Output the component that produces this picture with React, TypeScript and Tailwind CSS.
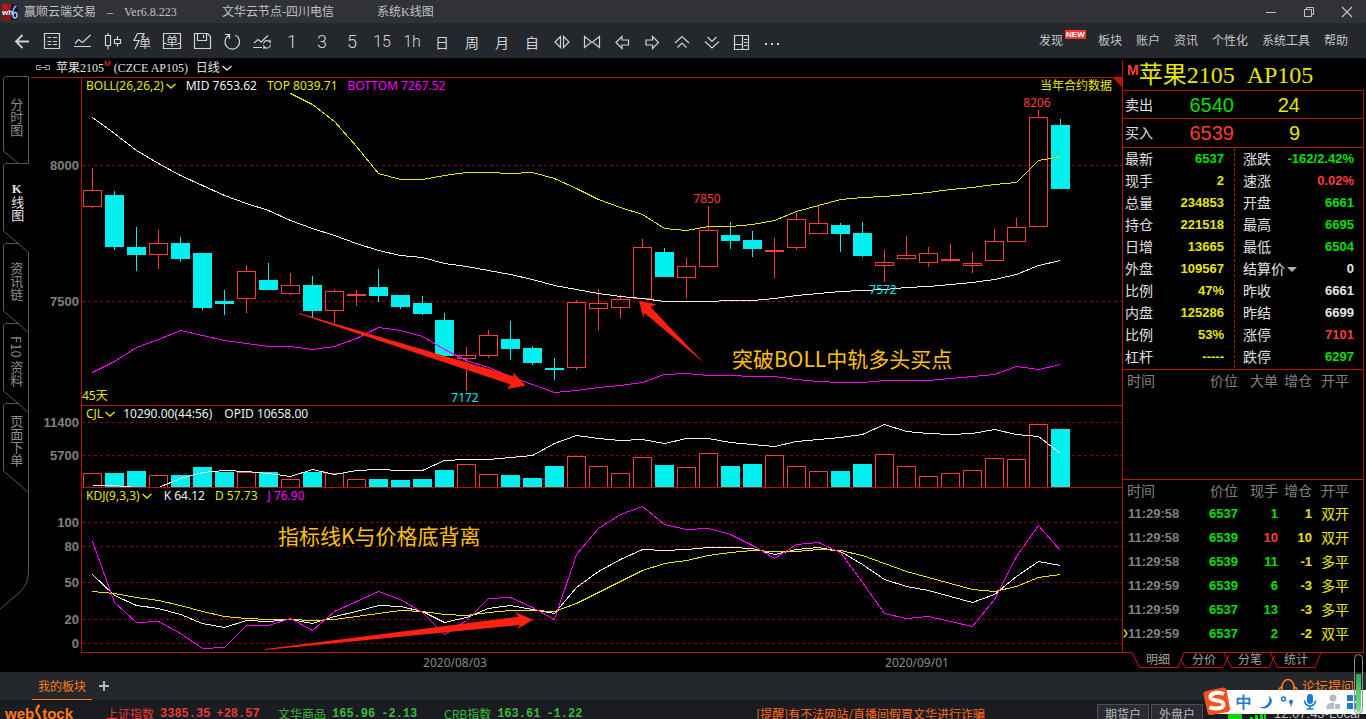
import type { ReactNode } from 'react';

type Candle = [kind: 'u' | 'd', high: number, top: number, bottom: number, low: number];

// chart space: first bar sits at x=92, one bar every 22px
const FIRST_X = 92;
const STEP = 22;
const AXIS_LEFT = 31;
const RED = '#ff3b3b';
const CYAN = '#00f0f0';
const FRAME = '#b8140c';

const candles: Candle[] = [
  ['u', 168, 190, 207, 208], ['d', 191, 195, 247, 250], ['d', 227, 247, 255, 271],
  ['u', 230, 243, 255, 269], ['d', 237, 243, 259, 262], ['d', 253, 253, 308, 310],
  ['d', 290, 301, 304, 315], ['u', 265, 271, 299, 313], ['d', 263, 280, 290, 290],
  ['u', 273, 285, 294, 295], ['d', 276, 285, 311, 317], ['u', 289, 291, 311, 323],
  ['u', 290, 294, 296, 306], ['d', 269, 287, 296, 302], ['d', 295, 295, 307, 309],
  ['d', 296, 303, 314, 315], ['d', 313, 320, 356, 356], ['u', 347, 355, 359, 391],
  ['u', 330, 335, 356, 358], ['d', 321, 339, 349, 360], ['d', 346, 348, 363, 365],
  ['d', 358, 368, 370, 380], ['u', 300, 302, 368, 370], ['u', 289, 303, 309, 330],
  ['u', 295, 299, 308, 318], ['u', 239, 247, 299, 299], ['d', 248, 252, 277, 277],
  ['u', 258, 266, 278, 298], ['u', 206, 230, 267, 267], ['d', 222, 235, 241, 249],
  ['d', 231, 240, 249, 257], ['u', 238, 250, 252, 278], ['u', 213, 219, 248, 250],
  ['u', 205, 223, 234, 234], ['d', 223, 225, 234, 252], ['d', 222, 233, 256, 257],
  ['u', 250, 262, 266, 282], ['u', 236, 255, 259, 260], ['u', 247, 253, 263, 267],
  ['u', 244, 259, 261, 262], ['u', 252, 263, 266, 273], ['u', 229, 241, 261, 261],
  ['u', 218, 227, 242, 242], ['u', 110, 117, 227, 227], ['d', 119, 125, 189, 189],
];

const bollMid = [117, 133, 150, 163, 175, 185, 195, 203, 210, 220, 228, 235, 243, 250, 255, 257, 263, 266, 270, 274, 279, 285, 289, 293, 296, 298, 301, 301, 301, 300, 300, 298, 295, 293, 291, 290, 289, 287, 286, 284, 282, 279, 274, 265, 260];
const bollTop = [93, 104, 121, 146, 173, 179, 179, 175, 172, 172, 173, 172, 178, 188, 199, 207, 214, 228, 230, 226, 226, 224, 220, 211, 205, 199, 197, 196, 194, 192, 189, 187, 184, 182, 160, 156];
const bollBottom = [372, 361, 347, 339, 330, 335, 340, 343, 346, 346, 349, 346, 338, 327, 330, 336, 349, 360, 367, 376, 384, 392, 390, 387, 385, 382, 374, 373, 375, 375, 376, 376, 379, 381, 382, 382, 380, 380, 380, 378, 376, 374, 366, 369, 364];

const volumes = [473, 473, 471, 475, 475, 467, 472, 472, 472, 479, 472, 473, 479, 479, 480, 479, 470, 464, 474, 475, 478, 466, 456, 466, 473, 457, 465, 467, 453, 466, 464, 455, 466, 471, 471, 464, 454, 466, 476, 473, 470, 458, 459, 424, 429];
const openInterest = [485, 485, 487, 487, 478, 472, 470, 471, 473, 476, 469, 474, 470, 469, 470, 470, 460, 459, 459, 457, 455, 443, 435, 438, 440, 439, 443, 438, 438, 442, 444, 446, 441, 439, 437, 434, 424, 431, 433, 434, 433, 429, 434, 436, 453];

const kdjJ = [541, 602, 622, 621, 633, 648, 647, 625, 625, 618, 630, 611, 601, 591, 599, 612, 634, 620, 598, 597, 607, 619, 554, 528, 514, 506, 524, 529, 528, 534, 545, 558, 544, 542, 552, 582, 613, 618, 616, 621, 626, 599, 556, 525, 550];
const kdjK = [574, 595, 605, 608, 614, 623, 627, 620, 621, 619, 623, 616, 611, 605, 606, 611, 622, 617, 608, 605, 609, 613, 587, 571, 559, 549, 550, 549, 547, 547, 548, 554, 549, 547, 551, 564, 579, 586, 590, 596, 602, 594, 576, 561, 565];
const kdjD = [591, 593, 597, 600, 605, 611, 616, 618, 619, 619, 620, 619, 616, 613, 610, 611, 614, 615, 612, 610, 610, 611, 603, 592, 581, 570, 563, 560, 555, 552, 550, 551, 551, 549, 550, 555, 563, 571, 577, 583, 589, 591, 586, 577, 574];

const quoteLeft = [
  ['最新', '6537', 'text-[#00e000]'],
  ['现手', '2', 'text-[#e6e600]'],
  ['总量', '234853', 'text-[#e6e600]'],
  ['持仓', '221518', 'text-[#e6e600]'],
  ['日增', '13665', 'text-[#e6e600]'],
  ['外盘', '109567', 'text-[#e6e600]'],
  ['比例', '47%', 'text-[#e6e600]'],
  ['内盘', '125286', 'text-[#e6e600]'],
  ['比例', '53%', 'text-[#e6e600]'],
  ['杠杆', '-----', 'text-[#e6e600]'],
];

const quoteRight = [
  ['涨跌', '-162/2.42%', 'text-[#00e000]'],
  ['速涨', '0.02%', 'text-[#ff3b3b]'],
  ['开盘', '6661', 'text-[#00e000]'],
  ['最高', '6695', 'text-[#00e000]'],
  ['最低', '6504', 'text-[#00e000]'],
  ['结算价', '0', 'text-[#e6e6e6]'],
  ['昨收', '6661', 'text-[#e6e6e6]'],
  ['昨结', '6699', 'text-[#e6e6e6]'],
  ['涨停', '7101', 'text-[#ff3b3b]'],
  ['跌停', '6297', 'text-[#00e000]'],
];

const trades = [
  { time: '11:29:58', price: '6537', lots: '1', change: '1', type: '双开', lotsColor: 'text-[#00e000]' },
  { time: '11:29:58', price: '6539', lots: '10', change: '10', type: '双开', lotsColor: 'text-[#ff3b3b]' },
  { time: '11:29:58', price: '6539', lots: '11', change: '-1', type: '多平', lotsColor: 'text-[#00e000]' },
  { time: '11:29:59', price: '6539', lots: '6', change: '-3', type: '多平', lotsColor: 'text-[#00e000]' },
  { time: '11:29:59', price: '6537', lots: '13', change: '-3', type: '多平', lotsColor: 'text-[#00e000]' },
  { time: '11:29:59', price: '6537', lots: '2', change: '-2', type: '双平', lotsColor: 'text-[#00e000]' },
];

const glyph = "font-['Noto_Sans_CJK_SC',sans-serif]";
const song = "font-['Liberation_Serif','Noto_Sans_CJK_SC',serif]";

function Icon({ children }: { children: ReactNode }) {
  return (
    <svg width="24" height="24" viewBox="0 0 24 24" fill="none" stroke="currentColor" strokeWidth="1.2" aria-hidden="true">
      {children}
    </svg>
  );
}

const tools: { label: string; icon: ReactNode }[] = [
  { label: '返回', icon: <Icon><path strokeWidth="1.8" d="M19 11.5H6.5M12.5 5L6 11.5L12.5 18" /></Icon> },
  { label: '报价', icon: <Icon><path d="M4.5 3.5h15v15h-15zM7.5 7.5h4M13 7.5h4M7.5 11.5h4M13 11.5h4M7.5 14.5h4M13 14.5h4" /></Icon> },
  { label: '分时', icon: <Icon><path d="M4 16.5h17M5 13.5L8.5 9.5L12.5 12.5L20.5 5" /></Icon> },
  { label: 'K线', icon: <Icon><path d="M5.5 5.5h5v10h-5zM8 3v2.5M8 15.5v4M14.5 9.5h6v4h-6zM17.5 6v3.5M17.5 13.5v3" /></Icon> },
  {
    label: '闪电下单',
    icon: (
      <Icon>
        <path d="M7.5 3.500h6.500l-2 3.500h3M7.500 3.500L4 10.500h5L5 19" />
        <text x="9" y="18" fontSize="12" fill="currentColor" stroke="none" className={glyph}>单</text>
      </Icon>
    ),
  },
  {
    label: '下单',
    icon: (
      <Icon>
        <path d="M3.5 3.5h17v15h-17zM3.5 13.5h3M17.5 13.5h3" />
        <text x="6" y="16" fontSize="12" fill="currentColor" stroke="none" className={glyph}>单</text>
      </Icon>
    ),
  },
  { label: '保存', icon: <Icon><path d="M4.5 3.5h13l3 3v12h-16zM7.5 3.5v7h9v-7M13.5 5v3" /></Icon> },
  { label: '刷新', icon: <Icon><path d="M9 5.3A7.3 7.3 0 1 0 15.5 5.3M9.5 9V4.5H5" /></Icon> },
  { label: '切换', icon: <Icon><path d="M3 17.5h9M4 13L8 9.5L11 12L18 5.5M13.5 13.5a3.6 3.6 0 0 1 6.6-1.2v-2.5M20.5 15a3.6 3.6 0 0 1-6.6 1.4v2.6" /></Icon> },
  { label: '1', icon: <span className="font-['Roboto',sans-serif] text-lg leading-6 font-light">1</span> },
  { label: '3', icon: <span className="font-['Roboto',sans-serif] text-lg leading-6 font-light">3</span> },
  { label: '5', icon: <span className="font-['Roboto',sans-serif] text-lg leading-6 font-light">5</span> },
  { label: '15', icon: <span className="font-['Roboto',sans-serif] text-base leading-6 font-light">15</span> },
  { label: '1h', icon: <span className="font-['Roboto',sans-serif] text-base leading-6 font-light">1h</span> },
  { label: '日', icon: <span className="text-sm">日</span> },
  { label: '周', icon: <span className="text-sm">周</span> },
  { label: '月', icon: <span className="text-sm">月</span> },
  { label: '自', icon: <span className="text-sm">自</span> },
  { label: '放宽', icon: <Icon><path d="M10.5 6.5L5 12l5.5 5.5zM13.5 6.5L19 12l-5.5 5.5z" /></Icon> },
  { label: '收窄', icon: <Icon><path d="M4.5 6.5L11.5 12l-7 5.5zM19.5 6.5L12.5 12l7 5.5z" /></Icon> },
  { label: '左移', icon: <Icon><path d="M6 12.5L12 6.5V10h6.5v5H12v3.5z" /></Icon> },
  { label: '右移', icon: <Icon><path d="M18.5 12.5L12.5 6.5V10H6v5h6.5v3.5z" /></Icon> },
  { label: '上移', icon: <Icon><path d="M5 13L12 6.5L19 13M7.5 17.5L12 13L16.5 17.5" /></Icon> },
  { label: '下移', icon: <Icon><path d="M5 11.5L12 18L19 11.5M7.5 7L12 11.5L16.5 7" /></Icon> },
  { label: '布局', icon: <Icon><path d="M4.5 5.5h14v14h-14zM12.5 5.5v14M4.5 14.5h8M14 9.5h3.5M14 12.5h3.5M14 15.5h3.5" /></Icon> },
  { label: '更多', icon: <Icon><path strokeWidth="2" d="M5 14h2M11 14h2M17 14h2" /></Icon> },
];

function TitleBar() {
  return (
    <header className={`${song} flex h-[23px] shrink-0 items-center bg-[#303238] pl-[2px] text-xs text-[#c0c2c6]`}>
      <svg width="16" height="16" viewBox="0 0 16 16" aria-hidden="true">
        <rect width="16" height="16" fill="#101a3c" />
        <path d="M0 0h9v4L5 9H0z" fill="#b01818" />
        <path d="M0 10h9v6H0z" fill="#8c1414" />
        <text x="0" y="11" fontSize="8" fontWeight="bold" fill="#fff" fontFamily="Liberation Sans">wh</text>
        <path d="M14.5 1.5C11 4 10.5 8 11 11M13 8.5a2 2.7 0 1 1 0 5.4a2 2.7 0 1 1 0-5.4" fill="none" stroke="#9cc8ff" strokeWidth="1.5" />
      </svg>
      <h1 className="ml-[6px]">赢顺云端交易</h1>
      <span className="ml-[8px] w-[12px] text-center">–</span>
      <span className="ml-[8px] w-[98px]">Ver6.8.223</span>
      <span className="w-[155px]">文华云节点-四川电信</span>
      <span>系统K线图</span>
      <div className="ml-auto flex h-full">
        <button aria-label="最小化" className="flex w-[38px] items-center justify-center">
          <svg width="12" height="12" stroke="currentColor" fill="none"><path d="M1 6.5h10" /></svg>
        </button>
        <button aria-label="还原" className="flex w-[38px] items-center justify-center">
          <svg width="12" height="12" stroke="currentColor" fill="none"><path d="M1.5 3.5h7v7h-7zM3.5 3.5v-2h7v7h-2" /></svg>
        </button>
        <button aria-label="关闭" className="flex w-[38px] items-center justify-center">
          <svg width="12" height="12" stroke="currentColor" fill="none" strokeWidth="1.3"><path d="M1 1l10 10M11 1L1 11" /></svg>
        </button>
      </div>
    </header>
  );
}

function Toolbar() {
  return (
    <div className={`${glyph} flex h-[35px] shrink-0 items-center justify-between bg-[#24272c] pr-[18px] pl-[7px] text-[#d0d2d4]`}>
      <div className="flex pt-[3px]">
        {tools.map((t) => (
          <button key={t.label} aria-label={t.label} className="flex h-6 w-[30px] items-center justify-center leading-6">
            {t.icon}
          </button>
        ))}
      </div>
      <nav className="flex gap-[14px] pb-[2px] text-xs text-[#c4c6c8]">
        <a href="#" className="relative mr-[21px]">
          发现
          <span className="absolute -top-[2px] left-full ml-[2px] h-[9px] w-[21px] bg-[#ff3330] text-center font-['Liberation_Sans',sans-serif] text-[8px] leading-[9px] font-bold text-white">NEW</span>
        </a>
        <a href="#">板块</a>
        <a href="#">账户</a>
        <a href="#">资讯</a>
        <a href="#">个性化</a>
        <a href="#">系统工具</a>
        <a href="#">帮助</a>
      </nav>
    </div>
  );
}

function SideTabs() {
  const tab = 'flex h-20 w-full items-center justify-center pb-1 [writing-mode:vertical-rl]';
  return (
    <aside className={`${glyph} relative w-[31px] shrink-0 pt-[18px] text-[13px] text-[#8c8c8c]`}>
      <svg className="absolute inset-0 h-full w-full" fill="none" stroke="#565656" aria-hidden="true">
        <path d="M18.5 105.5L3.5 93V20.5L5.5 18.5H28.5V105.5H5.5L3.5 107.5V173L28.5 194.5" />
        <path d="M18.5 185.5H5.5L3.5 187.5V253L28.5 274.5M18.5 265.5H5.5L3.5 267.5V333L28.5 354.5M18.5 345.5H5.5L3.5 347.5V413L28.5 434.5" />
        <path d="M28.5 194V515Q28 527 19 535L0 551" />
      </svg>
      <nav className="relative pl-[2px]">
        <button className="flex h-[87px] w-full items-center justify-center pb-1 [writing-mode:vertical-rl]">分时图</button>
        <button className={`${song} ${tab} text-[#e0e0e0] [text-orientation:upright]`}><b>K</b>线图</button>
        <button className={tab}>资讯链</button>
        <button className={tab}>F10 资料</button>
        <button className={tab}>页面下单</button>
      </nav>
    </aside>
  );
}

function Series({ values, color, start = 0 }: { values: number[]; color: string; start?: number }) {
  const points = values.map((v, i) => `${FIRST_X + 0.5 + (start + i) * STEP},${v + 0.5}`).join(' ');
  return <polyline points={points} fill="none" stroke={color} shapeRendering="crispEdges" />;
}

function Pane({ top, height, levels, title, children }: {
  top: number;
  height: string;
  levels: [number, string][];
  title: ReactNode;
  children: ReactNode;
}) {
  return (
    <section className={`relative ${height}`}>
      <svg className="absolute inset-0 h-full w-full overflow-hidden font-['Noto_Sans','Noto_Sans_CJK_SC',sans-serif]">
        <line x1="50.5" x2="50.5" y1="0" y2="100%" stroke={FRAME} />
        {levels.map(([y, label]) => (
          <g key={label}>
            <line x1="51" x2="100%" y1={y - top + 0.5} y2={y - top + 0.5} stroke="#860000" strokeDasharray="3 3" />
            <text x="48" y={y - top + 5} textAnchor="end" fontSize="13" fontWeight="bold" fill="#808080" className="font-['Liberation_Sans',sans-serif]">{label}</text>
          </g>
        ))}
        <g transform={`translate(${-AXIS_LEFT} ${-top})`}>{children}</g>
      </svg>
      <div className="relative flex h-4 items-center pl-[55px] text-xs">{title}</div>
    </section>
  );
}

function Chevron() {
  return (
    <svg width="10" height="8" fill="none" stroke="currentColor" strokeWidth="1.4" className="shrink-0"><path d="M0.5 2l4.5 4l4.5 -4" /></svg>
  );
}

function Rule() {
  return <div className="ml-[50px] h-px bg-[#b8140c]" />;
}

function Charts() {
  return (
    <main className="flex min-w-0 flex-1 flex-col font-['Noto_Sans','Noto_Sans_CJK_SC',sans-serif]">
      <div className={`${song} flex h-[19px] items-center pl-[4px] text-xs text-[#e0e0e0]`}>
        <svg width="16" height="8" fill="none" stroke="#a0a0a0"><path d="M6 1.5H1.5v4H6M10 1.5h4.5v4H10M4 3.5h8" /></svg>
        <h2 className="ml-[5px]">苹果2105</h2>
        <span className="mb-[6px] font-['Liberation_Sans',sans-serif] text-[8px] text-[#ff3b3b]">M</span>
        <span className="ml-[3px] w-[82px] whitespace-nowrap">(CZCE AP105)</span>
        <button className="flex items-center gap-[2px]">日线<Chevron /></button>
      </div>
      <div className="h-px bg-[#b8140c]" />

      <Pane
        top={78}
        height="h-[327px]"
        levels={[[165, '8000'], [301, '7500']]}
        title={
          <>
            <button className="flex items-center gap-[2px] text-[#e6e600]">BOLL(26,26,2)<Chevron /></button>
            <span className="ml-[10px] text-[#f0f0f0]">MID 7653.62</span>
            <span className="ml-[10px] text-[#e6e600]">TOP 8039.71</span>
            <span className="ml-[10px] text-[#ff00ff]">BOTTOM 7267.52</span>
            <span className="mr-[10px] ml-auto text-[#e6e600]">当年合约数据</span>
            <span className="absolute top-0 right-0 h-[9px] w-[9px] bg-[#b8140c] [clip-path:polygon(0_0,100%_0,100%_100%)]" />
          </>
        }
      >
        {candles.map(([kind, high, top, bottom, low], i) => {
          const x = FIRST_X + i * STEP;
          const color = kind === 'u' ? RED : CYAN;
          return (
            <g key={i} fill={color} shapeRendering="crispEdges">
              <rect x={x} y={high} width="1" height={top - high} />
              <rect x={x} y={bottom} width="1" height={low - bottom} />
              {kind === 'u'
                ? <rect x={x - 8.5} y={top + 0.5} width="18" height={bottom - top - 1} fill="none" stroke={color} />
                : <rect x={x - 9} y={top} width="19" height={bottom - top} />}
            </g>
          );
        })}
        <Series values={bollMid} color="#f0f0f0" />
        <Series values={bollTop} color="#e6e600" start={9} />
        <Series values={bollBottom} color="#ff00ff" />
        <g fontSize="12" textAnchor="middle">
          <text x="707" y="203" fill={RED}>7850</text>
          <text x="1037" y="107" fill={RED}>8206</text>
          <text x="465" y="402" fill={CYAN}>7172</text>
          <text x="883" y="294" fill={CYAN}>7572</text>
        </g>
        <text x="82" y="400" fontSize="12" fill="#e6e600">45天</text>
        <g fill="#ff2010">
          <path d="M299 313L514 376.5L513 372L525.5 385.7L507 389L510.5 384.5L299 314z" />
          <path d="M704 363L644.5 313L643.3 317.5L639 301L656.5 304.3L650.5 307z" />
        </g>
        <text x="732" y="367" fontSize="21" fill="#ffc000" className={glyph}>突破BOLL中轨多头买点</text>
      </Pane>
      <Rule />

      <Pane
        top={406}
        height="h-[81px]"
        levels={[[422, '11400'], [455, '5700']]}
        title={
          <>
            <button className="flex items-center gap-[2px] text-[#e6e600]">CJL<Chevron /></button>
            <span className="ml-2 text-[#f0f0f0]">10290.00(44:56)</span>
            <span className="ml-[12px] text-[#f0f0f0]">OPID 10658.00</span>
          </>
        }
      >
        {volumes.map((top, i) => {
          const x = FIRST_X + i * STEP;
          return candles[i][0] === 'u'
            ? <path key={i} d={`M${x - 8.5} 487V${top + 0.5}H${x + 9.5}V487`} fill="#000" stroke={RED} />
            : <rect key={i} x={x - 9} y={top} width="19" height={487 - top} fill={CYAN} />;
        })}
        <Series values={openInterest} color="#f0f0f0" />
      </Pane>
      <Rule />

      <Pane
        top={488}
        height="h-[164px]"
        levels={[[522, '100'], [546, '80'], [582, '50'], [619, '20'], [643, '0']]}
        title={
          <>
            <button className="flex items-center gap-[2px] text-[#e6e600]">KDJ(9,3,3)<Chevron /></button>
            <span className="ml-[12px] text-[#f0f0f0]">K 64.12</span>
            <span className="ml-[10px] text-[#e6e600]">D 57.73</span>
            <span className="ml-[10px] text-[#ff00ff]">J 76.90</span>
          </>
        }
      >
        <Series values={kdjK} color="#f0f0f0" />
        <Series values={kdjD} color="#e6e600" />
        <Series values={kdjJ} color="#ff00ff" />
        <path d="M265 649L518.5 616.7L515 612L533 619.7L517.5 629L519.5 625L265 650z" fill="#ff2010" />
        <text x="278" y="544" fontSize="21" fill="#ffc000" className={glyph}>指标线K与价格底背离</text>
      </Pane>
      <Rule />
      <svg className="h-[19px] w-full text-xs" fill="#8c8c8c" textAnchor="middle">
        <text x="424" y="14">2020/08/03</text>
        <text x="886" y="14">2020/09/01</text>
      </svg>
    </main>
  );
}

function TradeHead({ lots }: { lots: string }) {
  return (
    <>
      <colgroup>
        <col />
        <col className="w-[45px]" />
        <col className="w-10" />
        <col className="w-[34px]" />
        <col className="w-[51px]" />
      </colgroup>
      <thead className="text-sm leading-[22px] text-[#808080]">
        <tr>
          <th className="pl-1 text-left font-normal">时间</th>
          <th className="text-right font-normal">价位</th>
          <th className="text-right font-normal">{lots}</th>
          <th className="text-right font-normal">增仓</th>
          <th className="pr-[14px] text-right font-normal">开平</th>
        </tr>
      </thead>
    </>
  );
}

function QuoteList({ rows }: { rows: string[][] }) {
  return rows.map(([label, value, color], i) => (
    <div key={i} className="flex h-[22px] items-center justify-between">
      <dt className="flex items-center text-sm text-[#e0e0e0]">
        {label}
        {label === '结算价' && (
          <button aria-label="选择" className="ml-[2px] border-x-[5px] border-t-[5px] border-x-transparent border-t-[#b0b0b0]" />
        )}
      </dt>
      <dd className={`text-[13px] font-bold ${color}`}>{value}</dd>
    </div>
  ));
}

function QuotePanel() {
  return (
    <aside className="mt-[2px] flex w-[244px] shrink-0 flex-col font-['Liberation_Sans','Noto_Sans_CJK_SC',sans-serif]">
      <div className="flex flex-1 flex-col border-l border-[#b8140c]">
        <h2 className={`${song} flex h-[30px] items-center pl-1 text-2xl text-[#e6e600]`}>
          <span className="mb-[10px] font-['Liberation_Sans',sans-serif] text-sm leading-4 font-bold text-[#ff3b3b]">M</span>
          <span className="leading-[30px] whitespace-pre">苹果2105  AP105</span>
        </h2>
        <div className="mr-[2px] flex flex-1 flex-col border-t border-r border-[#b8140c]">
          <div className="flex h-7 items-center border-b border-[#b8140c] pl-[2px] text-xl">
            <span className="text-sm text-[#e0e0e0]">卖出</span>
            <span className="w-[81px] text-right text-[#00e000]">6540</span>
            <span className="w-[66px] text-right text-[#e6e600]">24</span>
          </div>
          <div className="flex h-[29px] items-center border-b border-[#b8140c] pl-[2px] text-xl">
            <span className="text-sm text-[#e0e0e0]">买入</span>
            <span className="w-[81px] text-right text-[#ff3b3b]">6539</span>
            <span className="w-[66px] text-right text-[#e6e600]">9</span>
          </div>
          <div className="flex border-b border-[#b8140c] pb-px">
            <dl className="w-28 border-r border-dashed border-[#b8140c] pr-[10px] pl-[2px]">
              <QuoteList rows={quoteLeft} />
            </dl>
            <dl className="flex-1 pr-[9px] pl-2">
              <QuoteList rows={quoteRight} />
            </dl>
          </div>
          <div className="flex-1 border-b border-[#b8140c]">
            <table className="w-full table-fixed">
              <TradeHead lots="大单" />
            </table>
          </div>
          <table className="mb-[6px] w-full table-fixed">
            <TradeHead lots="现手" />
            <tbody className="text-[13px] font-bold">
              {trades.map((t, i) => (
                <tr key={i} className="h-6">
                  <td className="relative pl-[5px] text-[#808080]">
                    {i === trades.length - 1 && (
                      <svg width="5" height="9" className="absolute top-[7px] left-0" fill="none" stroke="#e6e600" strokeWidth="1.3"><path d="M1 0.5l3 4l-3 4" /></svg>
                    )}
                    {t.time}
                  </td>
                  <td className="text-right text-[#00e000]">{t.price}</td>
                  <td className={`text-right ${t.lotsColor}`}>{t.lots}</td>
                  <td className="text-right text-[#e6e600]">{t.change}</td>
                  <td className="pr-[14px] text-right text-sm leading-6 font-normal text-[#e6e600]">{t.type}</td>
                </tr>
              ))}
            </tbody>
          </table>
        </div>
      </div>
      <div className="relative h-5 text-xs text-[#a0a0a0]">
        <svg className="absolute inset-0 h-full w-full" fill="none" stroke="#c8140c" aria-hidden="true">
          <path d="M0 0.5H10L17.5 15.5H56L62 0.5H242" />
          <path d="M59 8L63.5 15.5H101L107 3M102 0.5L109.5 15.5H147L153 3M148 0.5L155.5 15.5H193L199 0.5" />
        </svg>
        <nav className="relative flex h-4 pl-[13px]">
          {['明细', '分价', '分笔', '统计'].map((label) => (
            <button key={label} className="w-[46px] leading-4">{label}</button>
          ))}
        </nav>
      </div>
    </aside>
  );
}

// input method bar floating over the lower right corner
function ImeBar() {
  return (
    <div className="absolute right-0 bottom-[5px] flex h-6 w-[156px] items-center bg-white pl-[24px] text-[#1f78d1]">
      <svg width="30" height="30" viewBox="0 0 30 30" className="absolute -top-[4px] -left-[8px]" aria-hidden="true">
        <path d="M4 5L21 1.5Q24 1 24.5 4L28 22Q28.500 25 25.500 26L9 29Q6 29.5 5.5 26.5L1.5 8.5Q1 5.5 4 5z" fill="#f4511e" />
        <path d="M22 8C17 5.5 8 6.5 8.5 11.5C9 16 21 13 21.5 18C22 23 12 23.5 7.5 21" fill="none" stroke="#fff" strokeWidth="4" />
      </svg>
      <button className="w-5 text-center text-base leading-6 font-bold">中</button>
      <svg width="112" height="24" viewBox="0 0 112 24" aria-hidden="true">
        <path d="M14.5 5.5A8 8 0 0 1 4.5 16.5Q11 21 16.5 15Q20 9.5 14.5 5.5z" fill="currentColor" />
        <circle cx="29.5" cy="9" r="2" fill="none" stroke="currentColor" strokeWidth="1.5" />
        <path d="M35 11.5a2 2 0 1 1 3.5 1.5Q38 16 35.5 17Q37 15.5 36.5 14Q35 13.5 35 11.5z" fill="currentColor" />
        <rect x="53" y="4" width="6" height="10" rx="3" fill="currentColor" />
        <path d="M50.5 10.5a5.5 5.5 0 0 0 11 0M56 16v3M52.5 19h7" fill="none" stroke="currentColor" strokeWidth="1.6" />
        <g fill="#b4bccb">
          <circle cx="79" cy="8" r="3.5" />
          <path d="M72 19Q72 12.5 79 12.5Q86 12.5 86 19z" />
          <rect x="80.5" y="13.5" width="6" height="6" stroke="#fff" />
        </g>
        <path d="M93 5h6v6h-6zM93 13h6v6h-6zM101 13h5v6h-5zM101 5h5v6h-5z" fill="currentColor" />
      </svg>
    </div>
  );
}

function BoardBar() {
  return (
    <div className={`${glyph} flex h-7 shrink-0 items-center bg-[#24272c] pr-[12px] pl-8 text-xs`}>
      <button className="h-7 w-[60px] border-b border-[#ff7a1a] text-[#ff7a1a]">我的板块</button>
      <button aria-label="添加" className="ml-[7px]">
        <svg width="10" height="10" stroke="#b8b8b8" strokeWidth="2"><path d="M0 5h10M5 0v10" /></svg>
      </button>
      <a href="#" className="ml-auto flex items-center gap-1 text-[13px] text-[#ff7a1a]">
        <svg width="20" height="18" viewBox="0 0 20 18" fill="none" stroke="currentColor" strokeWidth="1.6">
          <path d="M4 10a6 7.5 0 0 1 12 0M4 10Q1 10.5 1 13.5T4 16.5zM16 10Q19 10.5 19 13.5T16 16.5z" />
        </svg>
        论坛提问
      </a>
    </div>
  );
}

function IndexQuote({ name, price, change, color }: { name: string; price: string; change: string; color: string }) {
  return (
    <span className={`flex gap-[6px] whitespace-nowrap ${color}`}>
      <span>{name}</span>
      <span className="font-['Liberation_Mono',monospace] font-bold">{price}</span>
      <span className="font-['Liberation_Mono',monospace] font-bold">{change}</span>
    </span>
  );
}

function StatusBar() {
  return (
    <footer className={`${glyph} flex h-7 shrink-0 items-center bg-[#1b1c22] pl-[5px] text-xs`}>
      <a href="#" aria-label="webStock" className="flex w-[101px] items-center font-['Liberation_Sans',sans-serif] text-[15px] font-bold text-[#ff7a1a]">
        web
        <svg width="8" height="20" viewBox="0 0 8 20" fill="none" stroke="currentColor" strokeWidth="2.4"><path d="M5.5 1Q1 5 3 9Q7 13 5.5 16Q4 18.5 0.5 18" /></svg>
        tock
      </a>
      <div className="w-[172px]"><IndexQuote name="上证指数" price="3385.35" change="+28.57" color="text-[#e83a3a]" /></div>
      <div className="w-[166px]"><IndexQuote name="文华商品" price="165.96" change="-2.13" color="text-[#3cb83c]" /></div>
      <IndexQuote name="CRB指数" price="163.61" change="-1.22" color="text-[#3cb83c]" />
      <a href="#" className="mr-[112px] ml-auto text-[#ff6a1a]">[提醒]有不法网站/直播间假冒文华进行诈骗</a>
      <button className="mt-[4px] h-6 w-[52px] border border-[#4c4f54] bg-[#2a2c31] pb-1 text-[#b8b8b8]">期货户</button>
      <button className="mt-[4px] ml-[2px] h-6 w-[52px] border border-[#4c4f54] bg-[#2a2c31] pb-1 text-[#b8b8b8]">外盘户</button>
      <svg width="40" height="14" className="ml-[25px]" fill="#00d800" aria-hidden="true">
        <path d="M0 0h14v12H0zM22 10h3v4h-3zM27 8h3v6h-3zM32 5h3v9h-3zM36 3h2v11h-2z" />
      </svg>
      <span className="mr-[12px] ml-[6px] w-[80px] whitespace-nowrap font-['Liberation_Sans',sans-serif] text-[13px] text-[#c0c0c0]">12:07:43-Local</span>
    </footer>
  );
}

export default function App() {
  return (
    <div className="relative flex h-screen flex-col overflow-hidden bg-black">
      <TitleBar />
      <Toolbar />
      <div className="flex min-h-[614px] flex-1">
        <SideTabs />
        <Charts />
        <QuotePanel />
      </div>
      <BoardBar />
      <StatusBar />
      <ImeBar />
      <div className="absolute right-[3px] bottom-[5px] flex h-[60px] w-[9px] items-end rounded-full border border-[#909090] p-px">
        <div className="h-[38px] w-full rounded-b-full bg-linear-to-b from-[#22b04c] to-[#7ee08a]" />
      </div>
    </div>
  );
}
